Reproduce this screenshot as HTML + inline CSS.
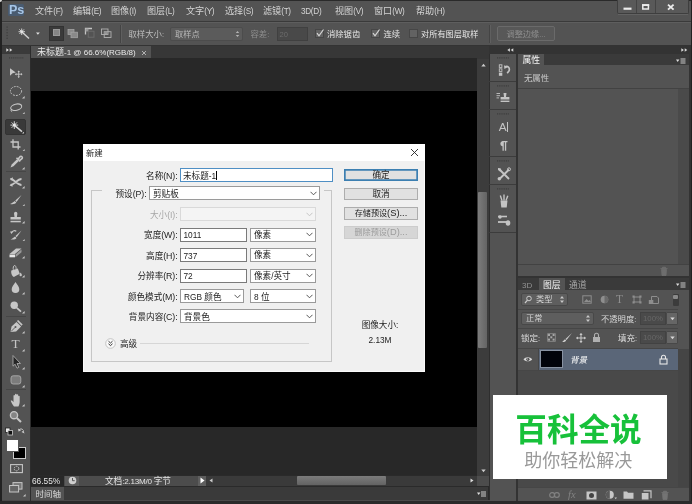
<!DOCTYPE html>
<html lang="zh"><head><meta charset="utf-8"><title>Photoshop</title><style>
html,body{margin:0;padding:0;background:#2a2a2a;}
body{width:692px;height:504px;position:relative;overflow:hidden;filter:blur(0.4px);font-family:"Liberation Sans","Noto Sans CJK SC",sans-serif;}
.b{position:absolute;display:block;}
.t{position:absolute;white-space:nowrap;font-family:"Liberation Sans","Noto Sans CJK SC",sans-serif;}
.l{vertical-align:baseline;}
</style></head><body>
<div class="b" style="left:0px;top:0px;width:692px;height:504px;background:#2a2a2a;"></div>
<div class="b" style="left:2px;top:1px;width:688.5px;height:20px;background:#535353;"></div>
<div class="b" style="left:8px;top:3.5px;width:15.5px;height:12.3px;background:#495b70;border-radius:1.500px"></div>
<div class="t" style="left:9px;top:1.500px;font-size:12.500px;line-height:16px;color:#a6c5e6;font-weight:bold;letter-spacing:-0.2px">Ps</div>
<div class="t" aria-label="文件(F)" style="left:35px;top:5.1px;font-size:9.1px;line-height:13px;color:#d4d4d4;">文件<span class="l" style="font-size:8.2px;letter-spacing:-0.3px;vertical-align:0.06em">(F)</span></div>
<div class="t" aria-label="编辑(E)" style="left:73px;top:5.1px;font-size:9.1px;line-height:13px;color:#d4d4d4;">编辑<span class="l" style="font-size:8.2px;letter-spacing:-0.3px;vertical-align:0.06em">(E)</span></div>
<div class="t" aria-label="图像(I)" style="left:111px;top:5.1px;font-size:9.1px;line-height:13px;color:#d4d4d4;">图像<span class="l" style="font-size:8.2px;letter-spacing:-0.3px;vertical-align:0.06em">(I)</span></div>
<div class="t" aria-label="图层(L)" style="left:147px;top:5.1px;font-size:9.1px;line-height:13px;color:#d4d4d4;">图层<span class="l" style="font-size:8.2px;letter-spacing:-0.3px;vertical-align:0.06em">(L)</span></div>
<div class="t" aria-label="文字(Y)" style="left:186px;top:5.1px;font-size:9.1px;line-height:13px;color:#d4d4d4;">文字<span class="l" style="font-size:8.2px;letter-spacing:-0.3px;vertical-align:0.06em">(Y)</span></div>
<div class="t" aria-label="选择(S)" style="left:225px;top:5.1px;font-size:9.1px;line-height:13px;color:#d4d4d4;">选择<span class="l" style="font-size:8.2px;letter-spacing:-0.3px;vertical-align:0.06em">(S)</span></div>
<div class="t" aria-label="滤镜(T)" style="left:263px;top:5.1px;font-size:9.1px;line-height:13px;color:#d4d4d4;">滤镜<span class="l" style="font-size:8.2px;letter-spacing:-0.3px;vertical-align:0.06em">(T)</span></div>
<div class="t" aria-label="3D(D)" style="left:301px;top:5.1px;font-size:9.1px;line-height:13px;color:#d4d4d4;"><span class="l" style="font-size:8.2px;letter-spacing:-0.3px;vertical-align:0.06em">3D(D)</span></div>
<div class="t" aria-label="视图(V)" style="left:335px;top:5.1px;font-size:9.1px;line-height:13px;color:#d4d4d4;">视图<span class="l" style="font-size:8.2px;letter-spacing:-0.3px;vertical-align:0.06em">(V)</span></div>
<div class="t" aria-label="窗口(W)" style="left:374px;top:5.1px;font-size:9.1px;line-height:13px;color:#d4d4d4;">窗口<span class="l" style="font-size:8.2px;letter-spacing:-0.3px;vertical-align:0.06em">(W)</span></div>
<div class="t" aria-label="帮助(H)" style="left:416px;top:5.1px;font-size:9.1px;line-height:13px;color:#d4d4d4;">帮助<span class="l" style="font-size:8.2px;letter-spacing:-0.3px;vertical-align:0.06em">(H)</span></div>
<div class="b" style="left:617px;top:0px;width:72px;height:13.5px;background:#595959;border:1px solid #3e3e3e;border-top:none;box-sizing:border-box;border-radius:0 0 2px 2px"></div>
<div class="b" style="left:618px;top:14px;width:70px;height:1px;background:#626262;"></div>
<div class="b" style="left:636px;top:0px;width:1px;height:13px;background:#444;"></div>
<div class="b" style="left:654.5px;top:0px;width:1px;height:13px;background:#444;"></div>
<svg class="b" style="left:617px;top:0px;" width="72" height="13" viewBox="0 0 72 13"><rect x="6.5" y="7.6" width="8" height="2.2" fill="#ececec"/><rect x="25.8" y="5" width="5.6" height="4" fill="none" stroke="#ececec" stroke-width="1.5"/><rect x="25" y="4.2" width="7.200" height="1.800" fill="#ececec"/><path d="M51 4.600l5.600 5M56.600 4.600l-5.600 5" stroke="#ececec" stroke-width="1.900"/></svg>
<div class="b" style="left:2px;top:21px;width:688.5px;height:1px;background:#3a3a3a;"></div>
<div class="b" style="left:2px;top:22px;width:688.5px;height:23px;background:#535353;border-top:1px solid #5e5e5e;box-sizing:border-box"></div>
<div class="b" style="left:2px;top:45px;width:688.5px;height:1px;background:#333;"></div>
<svg class="b" style="left:6px;top:26px;" width="3" height="14" viewBox="0 0 3 14"><rect x="0.5" y="0.5" width="1.2" height="1.2" fill="#3c3c3c"/><rect x="0.5" y="3.3" width="1.2" height="1.2" fill="#3c3c3c"/><rect x="0.5" y="6.1" width="1.2" height="1.2" fill="#3c3c3c"/><rect x="0.5" y="8.9" width="1.2" height="1.2" fill="#3c3c3c"/><rect x="0.5" y="11.7" width="1.2" height="1.2" fill="#3c3c3c"/></svg>
<svg class="b" style="left:16px;top:26px;" width="26" height="16" viewBox="0 0 26 16"><path d="M6 6L13 12.500" stroke="#cfcfcf" stroke-width="1.500"/><path d="M5.700 2.500v6.500M2.500 5.700h6.500M3.400 3.400l4.600 4.600M8 3.400l-4.600 4.600" stroke="#dcdcdc" stroke-width=".9"/><circle cx="5.700" cy="5.700" r="1.300" fill="#e4e4e4"/><path d="M20 6.500h3.800l-1.900 2.200z" fill="#e0e0e0"/></svg>
<div class="b" style="left:49px;top:25.5px;width:15px;height:15px;background:#3a3a3a;border:1px solid #323232;box-sizing:border-box"></div>
<div class="b" style="left:53px;top:29px;width:7px;height:7px;background:#868686;border:1px solid #9a9a9a;box-sizing:border-box"></div>
<svg class="b" style="left:67px;top:28px;" width="12" height="11" viewBox="0 0 12 11"><rect x="1" y="1.500" width="6" height="5" fill="#8a8a8a" stroke="#a4a4a4" stroke-width=".8"/><rect x="4" y="4.200" width="6.500" height="5.500" fill="#8a8a8a" stroke="#a4a4a4" stroke-width=".8"/></svg>
<svg class="b" style="left:84px;top:27px;" width="12" height="12" viewBox="0 0 12 12"><path d="M1.500 7.500v-6h6.500" fill="none" stroke="#c4c4c4" stroke-width="1.300"/><rect x="1.500" y="1.500" width="3" height="3" fill="#999"/><rect x="4.200" y="4.200" width="5.800" height="6" fill="none" stroke="#6e6e6e" stroke-width=".9"/></svg>
<svg class="b" style="left:100px;top:28px;" width="13" height="11" viewBox="0 0 13 11"><rect x="1.500" y="1" width="6.500" height="5.500" fill="none" stroke="#b0b0b0" stroke-width=".9"/><rect x="4.200" y="3.700" width="6.800" height="5.800" fill="none" stroke="#b0b0b0" stroke-width=".9"/><rect x="4.600" y="4.100" width="3" height="2" fill="#999"/></svg>
<div class="b" style="left:120px;top:25px;width:1px;height:18px;background:#444;"></div>
<div class="b" style="left:121px;top:25px;width:1px;height:18px;background:#5f5f5f;"></div>
<div class="t" aria-label="取样大小:" style="left:128.5px;top:28px;font-size:8.4px;line-height:12px;color:#bdbdbd;">取样大小<span class="l" style="font-size:7.4px">:</span></div>
<div class="b" style="left:170px;top:26.5px;width:73px;height:14.5px;background:#5b5b5b;border:1px solid #4c4c4c;box-sizing:border-box;border-radius:2px"></div>
<div class="t" aria-label="取样点" style="left:175px;top:28.5px;font-size:8.2px;line-height:11px;color:#b8b8b8;">取样点</div>
<svg class="b" style="left:234.5px;top:30px;" width="5" height="8" viewBox="0 0 5 8"><path d="M.8 3L2.500 1L4.200 3zM.8 5L2.500 7L4.200 5z" fill="#b4b4b4"/></svg>
<div class="t" aria-label="容差:" style="left:250.5px;top:28px;font-size:8.4px;line-height:12px;color:#8e8e8e;">容差<span class="l" style="font-size:7.4px">:</span></div>
<div class="b" style="left:276.5px;top:26.5px;width:31px;height:14.5px;background:#494949;border:1px solid #404040;box-sizing:border-box"></div>
<div class="t" aria-label="20" style="left:279.5px;top:28.7px;font-size:7.6px;line-height:11px;color:#6c6c6c;"><span class="l" style="font-size:7.6px">20</span></div>
<div class="b" style="left:315px;top:29px;width:8.5px;height:8.5px;background:#626262;border:1px solid #464646;box-sizing:border-box"></div><svg class="b" style="left:315px;top:27.5px;" width="10" height="10" viewBox="0 0 10 10"><path d="M2 5.200l2 2.600L8.500 1.500" fill="none" stroke="#d6d6d6" stroke-width="1.200"/></svg>
<div class="t" aria-label="消除锯齿" style="left:327px;top:28px;font-size:8.3px;line-height:12px;color:#e6e6e6;">消除锯齿</div>
<div class="b" style="left:371px;top:29px;width:8.5px;height:8.5px;background:#626262;border:1px solid #464646;box-sizing:border-box"></div><svg class="b" style="left:371px;top:27.5px;" width="10" height="10" viewBox="0 0 10 10"><path d="M2 5.200l2 2.600L8.500 1.500" fill="none" stroke="#d6d6d6" stroke-width="1.200"/></svg>
<div class="t" aria-label="连续" style="left:383.5px;top:28px;font-size:8.3px;line-height:12px;color:#e6e6e6;">连续</div>
<div class="b" style="left:409px;top:29px;width:8.5px;height:8.5px;background:#626262;border:1px solid #464646;box-sizing:border-box"></div>
<div class="t" aria-label="对所有图层取样" style="left:421px;top:28.5px;font-size:8.2px;line-height:11px;color:#e6e6e6;">对所有图层取样</div>
<div class="b" style="left:489px;top:25px;width:1px;height:18px;background:#444;"></div>
<div class="b" style="left:490px;top:25px;width:1px;height:18px;background:#5f5f5f;"></div>
<div class="b" style="left:497px;top:26px;width:58px;height:15px;background:#585858;border:1px solid #6a6a6a;box-sizing:border-box;border-radius:2px"></div>
<div class="t" aria-label="调整边缘..." style="left:426px;width:200px;text-align:center;top:28.5px;font-size:8.2px;line-height:11px;color:#8e8e8e;">调整边缘<span class="l" style="font-size:7.544px">...</span></div>
<div class="b" style="left:31px;top:46px;width:458px;height:12.5px;background:#373737;"></div>
<div class="b" style="left:31px;top:58px;width:446px;height:417px;background:#282828;"></div>
<div class="b" style="left:31px;top:90.5px;width:446px;height:336.2px;background:#000;"></div>
<div class="b" style="left:31px;top:46px;width:120px;height:12px;background:#535353;"></div>
<div class="t" aria-label="未标题-1 @ 66.6%(RGB/8)" style="left:37px;top:46.2px;font-size:9px;line-height:13px;color:#e8e8e8;">未标题<span class="l" style="font-size:8px">-1 @ 66.6%(RGB/8)</span></div>
<svg class="b" style="left:141px;top:49.5px;" width="6" height="6" viewBox="0 0 6 6"><path d="M1 1l4 4M5 1l-4 4" stroke="#bbb" stroke-width=".9"/></svg>
<div class="b" style="left:477px;top:58.5px;width:11.5px;height:417px;background:#3c3c3c;"></div>
<div class="b" style="left:477.8px;top:192px;width:9.7px;height:156px;background:#6c6c6c;border-radius:1px;background:linear-gradient(90deg,#7c7c7c,#646464)"></div>
<svg class="b" style="left:480.5px;top:62.5px;" width="5" height="4" viewBox="0 0 5 4"><path d="M.3 3.500L2.500 .8L4.700 3.500z" fill="#ccc"/></svg>
<svg class="b" style="left:480.5px;top:468.5px;" width="5" height="4" viewBox="0 0 5 4"><path d="M.3 .5L2.500 3.200L4.700 .5z" fill="#ccc"/></svg>
<div class="b" style="left:488.5px;top:46px;width:1.5px;height:455px;background:#2e2e2e;"></div>
<div class="b" style="left:31px;top:475.5px;width:457px;height:10.5px;background:#3a3a3a;"></div>
<div class="b" style="left:31px;top:475.5px;width:33px;height:10.5px;background:#282828;"></div>
<div class="t" aria-label="66.55%" style="left:32px;top:474.5px;font-size:8.3px;line-height:12px;color:#e6e6e6;"><span class="l" style="font-size:8.3px">66.55%</span></div>
<div class="b" style="left:64px;top:475.5px;width:134px;height:10.5px;background:#4c4c4c;"></div>
<div class="b" style="left:64.5px;top:476px;width:14.5px;height:9.5px;background:#5c5c5c;"></div>
<svg class="b" style="left:68px;top:476px;" width="9" height="9" viewBox="0 0 9 9"><circle cx="4.5" cy="4.5" r="3.8" fill="#cfcfcf"/><path d="M4.5 2v2.700h2.200" stroke="#555" stroke-width="1" fill="none"/></svg>
<div class="t" aria-label="文档:2.13M/0 字节" style="left:105px;top:474.8px;font-size:8.6px;line-height:12px;color:#e6e6e6;">文档<span class="l" style="font-size:8.1px;letter-spacing:-0.25px">:2.13M/0 </span>字节</div>
<div class="b" style="left:198px;top:475.5px;width:8px;height:10.5px;background:#5e5e5e;"></div>
<svg class="b" style="left:199.5px;top:477px;" width="5" height="7" viewBox="0 0 5 7"><path d="M0.5 0.5L4.5 3.5L0.5 6.5z" fill="#fff"/></svg>
<svg class="b" style="left:209px;top:478px;" width="4" height="5" viewBox="0 0 4 5"><path d="M3.5 0.5L0.5 2.5L3.5 4.5z" fill="#ccc"/></svg>
<svg class="b" style="left:470px;top:478px;" width="4" height="5" viewBox="0 0 4 5"><path d="M0.5 0.5L3.5 2.5L0.5 4.5z" fill="#ddd"/></svg>
<div class="b" style="left:297px;top:476px;width:89px;height:9px;background:#6c6c6c;background:linear-gradient(#7c7c7c,#636363);border-radius:1px"></div>
<div class="b" style="left:477px;top:475.5px;width:11.5px;height:10.5px;background:#4c4c4c;"></div>
<div class="b" style="left:31px;top:487px;width:457px;height:13px;background:#3a3a3a;"></div>
<div class="b" style="left:31px;top:487px;width:33px;height:13px;background:#535353;"></div>
<div class="t" aria-label="时间轴" style="left:35.5px;top:487.7px;font-size:8.5px;line-height:12px;color:#dcdcdc;">时间轴</div>
<svg class="b" style="left:477px;top:491px;" width="9" height="6" viewBox="0 0 9 6"><path d="M0 1.500h3.400L1.700 4z" fill="#ddd"/><path d="M4 1h5M4 3h5M4 5h5" stroke="#ccc" stroke-width="1"/></svg>
<div class="b" style="left:1px;top:500px;width:688px;height:1px;background:#4a4a4a;"></div>
<div class="b" style="left:2px;top:46px;width:28px;height:8px;background:#3a3a3a;"></div>
<div class="b" style="left:2px;top:54px;width:28px;height:446px;background:#535353;"></div>
<div class="b" style="left:30px;top:46px;width:1px;height:455px;background:#2c2c2c;"></div>
<svg class="b" style="left:5.5px;top:48px;" width="7" height="4" viewBox="0 0 7 4"><path d="M.3 .3L2.900 2L.3 3.700zM3.700 .3L6.300 2L3.700 3.700z" fill="#d8d8d8"/></svg>
<svg class="b" style="left:9px;top:56.5px;" width="15" height="2" viewBox="0 0 15 2"><rect x="0" y="0.3" width="1" height="1.2" fill="#3c3c3c"/><rect x="1.9" y="0.3" width="1" height="1.2" fill="#3c3c3c"/><rect x="3.8" y="0.3" width="1" height="1.2" fill="#3c3c3c"/><rect x="5.7" y="0.3" width="1" height="1.2" fill="#3c3c3c"/><rect x="7.6" y="0.3" width="1" height="1.2" fill="#3c3c3c"/><rect x="9.5" y="0.3" width="1" height="1.2" fill="#3c3c3c"/><rect x="11.4" y="0.3" width="1" height="1.2" fill="#3c3c3c"/><rect x="13.3" y="0.3" width="1" height="1.2" fill="#3c3c3c"/></svg>
<svg class="b" style="left:6px;top:65px;" width="18" height="15" viewBox="0 0 18 15"><path d="M4 3.300l5.800 4.200L6.600 8.300L4 10.800z" fill="#c6c6c6"/><path d="M12.700 6.200v6M9.700 9.200h6" stroke="#c6c6c6" stroke-width=".9"/><path d="M12.700 5.400l1.200 1.500h-2.400zM12.700 13l1.200-1.500h-2.400zM8.900 9.200l1.500-1.200v2.400zM16.500 9.200l-1.500-1.200v2.400z" fill="#c6c6c6"/></svg>
<svg class="b" style="left:6px;top:84px;" width="18" height="15" viewBox="0 0 18 15"><ellipse cx="10" cy="7" rx="5.600" ry="4.500" fill="none" stroke="#c6c6c6" stroke-width="1" stroke-dasharray="1.800 1.200"/></svg>
<svg class="b" style="left:22px;top:96px;" width="2.6" height="2.6" viewBox="0 0 2.6 2.6"><path d="M2.600 0v2.600h-2.600z" fill="#c8c8c8"/></svg>
<svg class="b" style="left:6px;top:101px;" width="18" height="15" viewBox="0 0 18 15"><ellipse cx="10.200" cy="6.200" rx="5.600" ry="3.100" fill="none" stroke="#c6c6c6" stroke-width="1.100" transform="rotate(-14 10.200 6.200)"/><path d="M5.600 8.300c-1 1-.4 2 .5 2.600" fill="none" stroke="#c6c6c6" stroke-width="1"/></svg>
<svg class="b" style="left:22px;top:111.5px;" width="2.6" height="2.6" viewBox="0 0 2.6 2.6"><path d="M2.600 0v2.600h-2.600z" fill="#c8c8c8"/></svg>
<div class="b" style="left:5px;top:118.5px;width:21px;height:16px;background:#393939;border-radius:2px;border:1px solid #333;box-sizing:border-box"></div>
<svg class="b" style="left:6px;top:118px;" width="18" height="16" viewBox="0 0 18 16"><path d="M8.800 7.600l7.200 6" stroke="#d4d4d4" stroke-width="1.500"/><path d="M8.300 3.200v7.800M4.400 7.100h7.800M5.600 4.400l5.400 5.400M11 4.400l-5.400 5.400" stroke="#dcdcdc" stroke-width=".9"/><circle cx="8.300" cy="7.100" r="1.500" fill="#eaeaea"/></svg>
<svg class="b" style="left:21.5px;top:131px;" width="2.6" height="2.6" viewBox="0 0 2.6 2.6"><path d="M2.600 0v2.600h-2.600z" fill="#c8c8c8"/></svg>
<svg class="b" style="left:7px;top:137px;" width="18" height="15" viewBox="0 0 18 15"><path d="M6 2.300v7.700h7.500M3.500 5h7.700v7.600" fill="none" stroke="#c6c6c6" stroke-width="1.300"/></svg>
<svg class="b" style="left:22px;top:148.5px;" width="2.6" height="2.6" viewBox="0 0 2.6 2.6"><path d="M2.600 0v2.600h-2.600z" fill="#c8c8c8"/></svg>
<svg class="b" style="left:7px;top:154px;" width="18" height="16" viewBox="0 0 18 16"><path d="M3.500 13.500l1.200-3L10 5.200l1.800 1.800L6.500 12.300z" fill="#c6c6c6"/><path d="M9.500 3.800l3.700 3.700M11 5.200l2.300-2.700a1.400 1.400 0 0 1 1.900 1.900l-2.700 2.300" stroke="#c6c6c6" stroke-width="1.600" fill="none"/></svg>
<svg class="b" style="left:22px;top:167px;" width="2.6" height="2.6" viewBox="0 0 2.6 2.6"><path d="M2.600 0v2.600h-2.600z" fill="#c8c8c8"/></svg>
<div class="b" style="left:6px;top:171px;width:20px;height:1px;background:#464646;"></div>
<svg class="b" style="left:7px;top:175px;" width="18" height="15" viewBox="0 0 18 15"><path d="M3.500 4c4 0 6.500 6 11 6M3.500 10c4 0 6.500-6 11-6" fill="none" stroke="#c6c6c6" stroke-width="1.900"/><path d="M2.500 10.200l3-1.800v3.400zM2.800 4l3-1.800v3.400z" fill="#c6c6c6"/></svg>
<svg class="b" style="left:22px;top:186px;" width="2.6" height="2.6" viewBox="0 0 2.6 2.6"><path d="M2.600 0v2.600h-2.600z" fill="#c8c8c8"/></svg>
<svg class="b" style="left:7px;top:192px;" width="18" height="15" viewBox="0 0 18 15"><path d="M14.500 3L8.300 8.600l1.200 1.300z" fill="#c6c6c6"/><path d="M7.800 9l1.500 1.500c-.8 1.500-3.500 2-6.300 1.400c1.800-.4 2.800-1.500 4.800-2.900z" fill="#c6c6c6"/></svg>
<svg class="b" style="left:22px;top:203.5px;" width="2.6" height="2.6" viewBox="0 0 2.6 2.6"><path d="M2.600 0v2.600h-2.600z" fill="#c8c8c8"/></svg>
<svg class="b" style="left:7px;top:210px;" width="18" height="15" viewBox="0 0 18 15"><path d="M7 3.500a1.700 1.700 0 1 1 3.400 0l-.5 3.500h3.900v2.600H3.500V7h4z" fill="#c6c6c6"/><rect x="3.500" y="10.800" width="10.300" height="1.500" fill="#c6c6c6"/></svg>
<svg class="b" style="left:22px;top:221px;" width="2.6" height="2.6" viewBox="0 0 2.6 2.6"><path d="M2.600 0v2.600h-2.600z" fill="#c8c8c8"/></svg>
<svg class="b" style="left:7px;top:228px;" width="18" height="15" viewBox="0 0 18 15"><path d="M14.500 2.500L8.500 8l1.200 1.300z" fill="#c6c6c6"/><path d="M8 8.400l1.500 1.500c-.8 1.400-3.300 1.800-6 1.300c1.700-.4 2.600-1.400 4.500-2.800z" fill="#c6c6c6"/><path d="M4.300 5.200a3.300 3.300 0 0 1 5-2" fill="none" stroke="#c6c6c6" stroke-width="1.100"/><path d="M3 3.500l1.500 2.600l1.500-2.300z" fill="#c6c6c6"/></svg>
<svg class="b" style="left:22px;top:238.5px;" width="2.6" height="2.6" viewBox="0 0 2.6 2.6"><path d="M2.600 0v2.600h-2.600z" fill="#c8c8c8"/></svg>
<svg class="b" style="left:7px;top:245px;" width="18" height="14" viewBox="0 0 18 14"><path d="M2.500 9l6.500-5.500h5.500L8 9z" fill="#c6c6c6"/><path d="M2.500 9.500h5.500v2.800H2.500z" fill="#e6e6e6"/><path d="M8.500 9.500L14.500 4.500v2.800L8.500 12.300z" fill="#999"/></svg>
<svg class="b" style="left:22px;top:256px;" width="2.6" height="2.6" viewBox="0 0 2.6 2.6"><path d="M2.600 0v2.600h-2.600z" fill="#c8c8c8"/></svg>
<svg class="b" style="left:7px;top:263px;" width="18" height="15" viewBox="0 0 18 15"><path d="M4.300 7.500l6.500-2l2 5.200l-6 3.300c-1.800-.8-3-4-2.500-6.500z" fill="#c6c6c6"/><path d="M6.300 6.800c-.4-2 .2-4.300 1.300-4.300s1.600 1.800 1.500 3.400" fill="none" stroke="#c6c6c6" stroke-width="1"/><path d="M13.600 9.500c.6 1 1.300 1.700 1.300 2.500a1.200 1.200 0 0 1-2.400 0c0-.8 .6-1.500 1.100-2.500z" fill="#c6c6c6"/></svg>
<svg class="b" style="left:22px;top:275px;" width="2.6" height="2.6" viewBox="0 0 2.6 2.6"><path d="M2.600 0v2.600h-2.600z" fill="#c8c8c8"/></svg>
<svg class="b" style="left:7px;top:280px;" width="18" height="15" viewBox="0 0 18 15"><path d="M8.500 2c1.800 2.900 3.800 4.700 3.800 7.200a3.800 3.800 0 0 1-7.600 0c0-2.500 2-4.300 3.800-7.200z" fill="#c6c6c6"/></svg>
<svg class="b" style="left:22px;top:292px;" width="2.6" height="2.6" viewBox="0 0 2.6 2.6"><path d="M2.600 0v2.600h-2.600z" fill="#c8c8c8"/></svg>
<svg class="b" style="left:7px;top:299px;" width="18" height="15" viewBox="0 0 18 15"><circle cx="7.200" cy="6.200" r="3.700" fill="#c6c6c6"/><path d="M9.800 8.800l4.200 3.800" stroke="#c6c6c6" stroke-width="1.800"/></svg>
<svg class="b" style="left:22px;top:311px;" width="2.6" height="2.6" viewBox="0 0 2.6 2.6"><path d="M2.600 0v2.600h-2.600z" fill="#c8c8c8"/></svg>
<div class="b" style="left:6px;top:315.5px;width:20px;height:1px;background:#464646;"></div>
<svg class="b" style="left:7px;top:318px;" width="18" height="16" viewBox="0 0 18 16"><path d="M3.500 14l1-5.500l5-4.600l4.600 4.600l-5 5z" fill="#c6c6c6"/><path d="M4 13.500l4.200-4.200" stroke="#555" stroke-width=".9"/><circle cx="8.500" cy="9" r="1" fill="#555"/><path d="M10.500 2.500l4.600 4.600" stroke="#c6c6c6" stroke-width="1.700"/></svg>
<svg class="b" style="left:22px;top:331px;" width="2.6" height="2.6" viewBox="0 0 2.6 2.6"><path d="M2.600 0v2.600h-2.600z" fill="#c8c8c8"/></svg>
<div class="t" style="left:11.500px;top:335px;font-family:'Liberation Serif',serif;font-size:13.300px;line-height:17px;color:#c6c6c6">T</div>
<svg class="b" style="left:22px;top:349px;" width="2.6" height="2.6" viewBox="0 0 2.6 2.6"><path d="M2.600 0v2.600h-2.600z" fill="#c8c8c8"/></svg>
<svg class="b" style="left:7px;top:354px;" width="18" height="16" viewBox="0 0 18 16"><path d="M6 1.500l7.500 8H10l1.800 3.800l-1.800 .9l-1.900-4L6 12.200z" fill="#262626" stroke="#a8a8a8" stroke-width=".9"/></svg>
<svg class="b" style="left:22px;top:367px;" width="2.6" height="2.6" viewBox="0 0 2.6 2.6"><path d="M2.600 0v2.600h-2.600z" fill="#c8c8c8"/></svg>
<svg class="b" style="left:7px;top:373px;" width="18" height="14" viewBox="0 0 18 14"><rect x="4" y="2.800" width="9.800" height="8.200" rx="2.200" fill="#7c7c7c" stroke="#acacac" stroke-width=".9"/></svg>
<svg class="b" style="left:22px;top:385px;" width="2.6" height="2.6" viewBox="0 0 2.6 2.6"><path d="M2.600 0v2.600h-2.600z" fill="#c8c8c8"/></svg>
<div class="b" style="left:6px;top:389px;width:20px;height:1px;background:#464646;"></div>
<svg class="b" style="left:8.5px;top:391.5px;" width="18" height="16" viewBox="0 0 18 16"><path d="M5 14.500c-1.500-2-2.800-4.200-3.300-5.700c.8-.8 1.900-.2 2.800 1.400V3.800c0-1 1.500-1 1.500 0V7V2.600c0-1 1.600-1 1.600 0V7V3c0-1 1.600-1 1.600 0V7.500V4.600c0-1 1.500-1 1.500 0V9.800c0 1.900-.6 3.300-1.300 4.700z" fill="#c6c6c6"/></svg>
<svg class="b" style="left:22px;top:404px;" width="2.6" height="2.6" viewBox="0 0 2.6 2.6"><path d="M2.600 0v2.600h-2.600z" fill="#c8c8c8"/></svg>
<svg class="b" style="left:7px;top:409px;" width="18" height="15" viewBox="0 0 18 15"><circle cx="7" cy="6.200" r="3.600" fill="#858585" stroke="#c6c6c6" stroke-width="1.400"/><path d="M9.800 9l4.200 4" stroke="#c6c6c6" stroke-width="2"/></svg>
<svg class="b" style="left:4px;top:427px;" width="22" height="9" viewBox="0 0 22 9"><rect x="1.500" y="1" width="4.500" height="4.500" fill="#eee" stroke="#222" stroke-width=".8"/><rect x="4" y="3.500" width="4.500" height="4.500" fill="#111" stroke="#ccc" stroke-width=".8"/><path d="M15 3c1.500-1.500 3-1.500 4.500 .5" fill="none" stroke="#ccc" stroke-width="1"/><path d="M14 1.500l.5 3l2.500-1zM20.500 6.500l-1-3l-2 1.500z" fill="#ccc"/></svg>
<div class="b" style="left:12.5px;top:446.5px;width:13px;height:12px;background:#000;border:1px solid #ccc;box-sizing:border-box"></div>
<div class="b" style="left:5.5px;top:439px;width:13.5px;height:12.5px;background:#fff;border:1px solid #555;box-sizing:border-box"></div>
<svg class="b" style="left:9.5px;top:464px;" width="13" height="10" viewBox="0 0 13 10"><rect x=".6" y=".6" width="11.800" height="8" fill="none" stroke="#c6c6c6" stroke-width="1.100"/><circle cx="6.500" cy="4.600" r="2.300" fill="none" stroke="#c6c6c6" stroke-width="1" stroke-dasharray="1.400 .9"/></svg>
<svg class="b" style="left:8.5px;top:482px;" width="14" height="11" viewBox="0 0 14 11"><rect x="4" y=".6" width="9" height="6.500" fill="#777" stroke="#c6c6c6" stroke-width="1"/><rect x=".6" y="3.500" width="9" height="6.500" fill="#666" stroke="#c6c6c6" stroke-width="1"/></svg>
<svg class="b" style="left:23px;top:494px;" width="2.6" height="2.6" viewBox="0 0 2.6 2.6"><path d="M2.600 0v2.600h-2.600z" fill="#c8c8c8"/></svg>
<div class="b" style="left:489px;top:46px;width:200px;height:8px;background:#333;"></div>
<svg class="b" style="left:507px;top:48px;" width="7" height="4" viewBox="0 0 7 4"><path d="M2.900 .3L.3 2L2.900 3.700zM6.300 .3L3.700 2L6.300 3.700z" fill="#d8d8d8"/></svg>
<svg class="b" style="left:680.5px;top:48px;" width="7" height="4" viewBox="0 0 7 4"><path d="M.3 .3L2.900 2L.3 3.700zM3.700 .3L6.300 2L3.700 3.700z" fill="#d8d8d8"/></svg>
<div class="b" style="left:490px;top:54px;width:26px;height:447px;background:#535353;"></div>
<div class="b" style="left:516px;top:46px;width:2px;height:455px;background:#333;"></div>
<svg class="b" style="left:497px;top:56.5px;" width="12" height="2" viewBox="0 0 12 2"><rect x="0" y=".3" width="1" height="1.200" fill="#3c3c3c"/><rect x="1.8" y=".3" width="1" height="1.200" fill="#3c3c3c"/><rect x="3.6" y=".3" width="1" height="1.200" fill="#3c3c3c"/><rect x="5.4" y=".3" width="1" height="1.200" fill="#3c3c3c"/><rect x="7.2" y=".3" width="1" height="1.200" fill="#3c3c3c"/><rect x="9" y=".3" width="1" height="1.200" fill="#3c3c3c"/><rect x="10.8" y=".3" width="1" height="1.200" fill="#3c3c3c"/></svg>
<svg class="b" style="left:497px;top:85px;" width="12" height="2" viewBox="0 0 12 2"><rect x="0" y=".3" width="1" height="1.200" fill="#3c3c3c"/><rect x="1.8" y=".3" width="1" height="1.200" fill="#3c3c3c"/><rect x="3.6" y=".3" width="1" height="1.200" fill="#3c3c3c"/><rect x="5.4" y=".3" width="1" height="1.200" fill="#3c3c3c"/><rect x="7.2" y=".3" width="1" height="1.200" fill="#3c3c3c"/><rect x="9" y=".3" width="1" height="1.200" fill="#3c3c3c"/><rect x="10.8" y=".3" width="1" height="1.200" fill="#3c3c3c"/></svg>
<svg class="b" style="left:497px;top:113px;" width="12" height="2" viewBox="0 0 12 2"><rect x="0" y=".3" width="1" height="1.200" fill="#3c3c3c"/><rect x="1.8" y=".3" width="1" height="1.200" fill="#3c3c3c"/><rect x="3.6" y=".3" width="1" height="1.200" fill="#3c3c3c"/><rect x="5.4" y=".3" width="1" height="1.200" fill="#3c3c3c"/><rect x="7.2" y=".3" width="1" height="1.200" fill="#3c3c3c"/><rect x="9" y=".3" width="1" height="1.200" fill="#3c3c3c"/><rect x="10.8" y=".3" width="1" height="1.200" fill="#3c3c3c"/></svg>
<svg class="b" style="left:497px;top:160px;" width="12" height="2" viewBox="0 0 12 2"><rect x="0" y=".3" width="1" height="1.200" fill="#3c3c3c"/><rect x="1.8" y=".3" width="1" height="1.200" fill="#3c3c3c"/><rect x="3.6" y=".3" width="1" height="1.200" fill="#3c3c3c"/><rect x="5.4" y=".3" width="1" height="1.200" fill="#3c3c3c"/><rect x="7.2" y=".3" width="1" height="1.200" fill="#3c3c3c"/><rect x="9" y=".3" width="1" height="1.200" fill="#3c3c3c"/><rect x="10.8" y=".3" width="1" height="1.200" fill="#3c3c3c"/></svg>
<svg class="b" style="left:497px;top:188px;" width="12" height="2" viewBox="0 0 12 2"><rect x="0" y=".3" width="1" height="1.200" fill="#3c3c3c"/><rect x="1.8" y=".3" width="1" height="1.200" fill="#3c3c3c"/><rect x="3.6" y=".3" width="1" height="1.200" fill="#3c3c3c"/><rect x="5.4" y=".3" width="1" height="1.200" fill="#3c3c3c"/><rect x="7.2" y=".3" width="1" height="1.200" fill="#3c3c3c"/><rect x="9" y=".3" width="1" height="1.200" fill="#3c3c3c"/><rect x="10.8" y=".3" width="1" height="1.200" fill="#3c3c3c"/></svg>
<div class="b" style="left:489px;top:81px;width:27px;height:1.3px;background:#3c3c3c;"></div>
<div class="b" style="left:489px;top:108.5px;width:27px;height:1.3px;background:#3c3c3c;"></div>
<div class="b" style="left:489px;top:156px;width:27px;height:1.3px;background:#3c3c3c;"></div>
<div class="b" style="left:489px;top:184px;width:27px;height:1.3px;background:#3c3c3c;"></div>
<div class="b" style="left:489px;top:232px;width:27px;height:1.3px;background:#3c3c3c;"></div>
<svg class="b" style="left:497px;top:63px;" width="15" height="15" viewBox="0 0 15 15"><rect x="2.300" y="1.800" width="2.600" height="2.600" fill="none" stroke="#c4c4c4" stroke-width=".9"/><rect x="2.300" y="5.800" width="2.600" height="2.600" fill="none" stroke="#c4c4c4" stroke-width=".9"/><rect x="1.900" y="9.600" width="3.400" height="3.200" fill="#c4c4c4"/><path d="M8 3.800c2.800-1.200 5 .8 4.200 3.800l-2 2.600" fill="none" stroke="#c4c4c4" stroke-width="1.600"/><path d="M7 2.200l.4 3.800l3-1.700z" fill="#c4c4c4"/></svg>
<svg class="b" style="left:495px;top:91px;" width="17" height="14" viewBox="0 0 17 14"><path d="M8.500 2h3l-.5 4h3.400v2.600H5.600V6h3.400z" fill="#c4c4c4"/><rect x="5.600" y="9.600" width="8.800" height="1.400" fill="#c4c4c4"/><path d="M1.500 2.500h3.500M1.500 4.700h3.500M1.500 6.900h2.500" stroke="#c4c4c4" stroke-width=".9"/></svg>
<div class="t" style="left:498.800px;top:118.700px;font-size:11.800px;line-height:16px;color:#c4c4c4">A</div>
<div class="b" style="left:507px;top:121.5px;width:1px;height:10.5px;background:#c4c4c4;"></div>
<svg class="b" style="left:497px;top:140px;" width="12" height="12" viewBox="0 0 12 12"><path d="M5.500 1h5v1.200h-1.300v8.500h-1.300V2.200h-1.100v8.500H5.500V6.300a2.700 2.700 0 0 1 0-5.300z" fill="#c4c4c4"/></svg>
<svg class="b" style="left:496px;top:166px;" width="16" height="15" viewBox="0 0 16 15"><path d="M3.500 3.500l9.500 9.500M13 3.500L3.500 13" stroke="#c4c4c4" stroke-width="1.900"/><circle cx="3.300" cy="12.800" r="1.700" fill="#c4c4c4"/><path d="M2 2l2.500 .3l1 2.200l-1.500 1l-2-1.500z" fill="#c4c4c4"/><circle cx="13" cy="3.300" r="1.500" fill="none" stroke="#c4c4c4" stroke-width="1"/></svg>
<svg class="b" style="left:497px;top:193px;" width="14" height="15" viewBox="0 0 14 15"><path d="M3.500 7.500h7l-.8 7H4.300z" fill="#c4c4c4"/><path d="M5 7.500l-1.700-5M7 7.500V1.500M9 7.500l1.800-4.800" stroke="#c4c4c4" stroke-width="1.400"/></svg>
<svg class="b" style="left:496px;top:214px;" width="16" height="13" viewBox="0 0 16 13"><path d="M2 2.500h9" stroke="#c4c4c4" stroke-width="1.600"/><circle cx="4" cy="3" r="1.700" fill="#c4c4c4"/><path d="M2 8h9" stroke="#c4c4c4" stroke-width="1.800"/><ellipse cx="12" cy="9" rx="2.300" ry="2.800" fill="#c4c4c4"/></svg>
<div class="b" style="left:518px;top:54px;width:171px;height:11px;background:#3a3a3a;"></div>
<div class="b" style="left:518px;top:54px;width:26px;height:12px;background:#535353;"></div>
<div class="t" aria-label="属性" style="left:522.5px;top:54px;font-size:8.8px;line-height:12px;color:#f4f4f4;">属性</div>
<svg class="b" style="left:676px;top:58px;" width="10" height="6" viewBox="0 0 10 6"><path d="M0 1.500h3.400L1.700 4z" fill="#ddd"/><path d="M4.500 1h5M4.500 3h5M4.500 5h5" stroke="#ccc" stroke-width="1"/></svg>
<div class="b" style="left:518px;top:65px;width:171px;height:199px;background:#535353;"></div>
<div class="t" aria-label="无属性" style="left:524px;top:72px;font-size:8.4px;line-height:12px;color:#c8c8c8;">无属性</div>
<div class="b" style="left:518px;top:88px;width:171px;height:1px;background:#424242;"></div>
<div class="b" style="left:678px;top:89px;width:11px;height:175px;background:#4a4a4a;"></div>
<div class="b" style="left:518px;top:264px;width:171px;height:1px;background:#424242;"></div>
<div class="b" style="left:518px;top:265px;width:171px;height:11px;background:#535353;"></div>
<svg class="b" style="left:659px;top:266px;" width="10" height="10" viewBox="0 0 10 10"><path d="M1.500 2.500h7M3.500 2.500V1.200h3V2.500M2.500 3.500l.5 6h4l.5-6z" fill="#6e6e6e" stroke="#6e6e6e" stroke-width=".8"/></svg>
<div class="b" style="left:518px;top:276px;width:171px;height:2px;background:#333;"></div>
<div class="b" style="left:518px;top:278px;width:171px;height:12px;background:#3a3a3a;"></div>
<div class="t" aria-label="3D" style="left:522px;top:278.5px;font-size:8.6px;line-height:12px;color:#929292;"><span class="l" style="font-size:8px">3D</span></div>
<div class="b" style="left:539px;top:278px;width:26px;height:13px;background:#535353;"></div>
<div class="t" aria-label="图层" style="left:543px;top:278.5px;font-size:8.8px;line-height:12px;color:#f4f4f4;">图层</div>
<div class="t" aria-label="通道" style="left:569px;top:278.5px;font-size:8.8px;line-height:12px;color:#a8a8a8;">通道</div>
<svg class="b" style="left:676px;top:281.5px;" width="10" height="6" viewBox="0 0 10 6"><path d="M0 1.500h3.400L1.700 4z" fill="#ddd"/><path d="M4.500 1h5M4.500 3h5M4.500 5h5" stroke="#ccc" stroke-width="1"/></svg>
<div class="b" style="left:518px;top:290px;width:171px;height:211px;background:#535353;"></div>
<div class="b" style="left:518px;top:371px;width:160px;height:116px;background:#494949;"></div>
<div class="b" style="left:678px;top:349px;width:11px;height:138px;background:#454545;"></div>
<div class="b" style="left:521px;top:293px;width:47px;height:13px;background:#5e5e5e;border:1px solid #484848;box-sizing:border-box;border-radius:2px"></div>
<svg class="b" style="left:524px;top:295px;" width="9" height="9" viewBox="0 0 9 9"><circle cx="5" cy="3.500" r="2.300" fill="none" stroke="#ccc" stroke-width="1"/><path d="M3.500 5.200L1 8" stroke="#ccc" stroke-width="1.200"/></svg>
<div class="t" aria-label="类型" style="left:536px;top:294px;font-size:8.2px;line-height:11px;color:#d4d4d4;">类型</div>
<svg class="b" style="left:559px;top:295px;" width="6" height="9" viewBox="0 0 6 9"><path d="M1 3.500L3 1L5 3.500zM1 5.500L3 8L5 5.500z" fill="#c8c8c8"/></svg>
<svg class="b" style="left:582px;top:295px;" width="10" height="9" viewBox="0 0 10 9"><rect x=".8" y=".8" width="8.400" height="7.400" fill="none" stroke="#8e8e8e" stroke-width="1"/><path d="M2 7l2.500-3l2 2l1-1l1.500 2z" fill="#8e8e8e"/></svg>
<svg class="b" style="left:600px;top:295px;" width="9" height="9" viewBox="0 0 9 9"><circle cx="4.500" cy="4.500" r="3.800" fill="#8e8e8e"/><path d="M4.500 .7a3.800 3.800 0 0 1 0 7.600z" fill="#6a6a6a"/></svg>
<div class="t" style="left:616px;top:292px;font-family:'Liberation Serif',serif;font-size:11.500px;line-height:14px;color:#8e8e8e">T</div>
<svg class="b" style="left:632px;top:295px;" width="10" height="9" viewBox="0 0 10 9"><rect x="2" y="2" width="6" height="5" fill="none" stroke="#8e8e8e" stroke-width="1"/><rect x=".5" y=".5" width="2.200" height="2.200" fill="#8e8e8e"/><rect x="7.300" y=".5" width="2.200" height="2.200" fill="#8e8e8e"/><rect x=".5" y="6.300" width="2.200" height="2.200" fill="#8e8e8e"/><rect x="7.300" y="6.300" width="2.200" height="2.200" fill="#8e8e8e"/></svg>
<svg class="b" style="left:648px;top:294px;" width="11" height="11" viewBox="0 0 11 11"><path d="M3.500 2.500h5.500l1.500 1.500v5.500h-7z" fill="none" stroke="#8e8e8e" stroke-width="1"/><rect x=".8" y="6" width="4.500" height="4" fill="#8e8e8e"/></svg>
<div class="b" style="left:672.5px;top:294px;width:6px;height:11.5px;background:#3c3c3c;border-radius:1px"></div>
<div class="b" style="left:673px;top:294.5px;width:5px;height:4px;background:#8a8a8a;border-radius:1px"></div>
<div class="b" style="left:518px;top:309px;width:160px;height:1px;background:#464646;"></div>
<div class="b" style="left:521px;top:312px;width:73px;height:13px;background:#5e5e5e;border:1px solid #484848;box-sizing:border-box;border-radius:2px"></div>
<div class="t" aria-label="正常" style="left:526px;top:313px;font-size:8.2px;line-height:11px;color:#d4d4d4;">正常</div>
<svg class="b" style="left:585px;top:314px;" width="6" height="9" viewBox="0 0 6 9"><path d="M1 3.500L3 1L5 3.500zM1 5.500L3 8L5 5.500z" fill="#c8c8c8"/></svg>
<div class="t" aria-label="不透明度:" style="left:601px;top:312.5px;font-size:8.3px;line-height:12px;color:#d8d8d8;">不透明度<span class="l" style="font-size:7.4px">:</span></div>
<div class="b" style="left:640px;top:312px;width:26px;height:13px;background:#4a4a4a;border:1px solid #424242;box-sizing:border-box"></div>
<div class="t" aria-label="100%" style="left:643px;top:313px;font-size:7.8px;line-height:11px;color:#686868;"><span class="l" style="font-size:7.8px">100%</span></div>
<div class="b" style="left:666px;top:312px;width:11.5px;height:13px;background:#666;border:1px solid #484848;box-sizing:border-box;border-radius:1px"></div>
<svg class="b" style="left:669.5px;top:317px;" width="5" height="4" viewBox="0 0 5 4"><path d="M.3 .5h4.400L2.500 3.200z" fill="#d8d8d8"/></svg>
<div class="b" style="left:518px;top:328px;width:160px;height:1px;background:#464646;"></div>
<div class="t" aria-label="锁定:" style="left:521px;top:331.5px;font-size:8.5px;line-height:12px;color:#dcdcdc;">锁定<span class="l" style="font-size:7.4px">:</span></div>
<svg class="b" style="left:547px;top:333px;" width="9" height="9" viewBox="0 0 9 9"><rect x="1" y="1" width="2" height="2" fill="#a8a8a8"/><rect x="5.6" y="1" width="2" height="2" fill="#a8a8a8"/><rect x="3.3" y="3.3" width="2" height="2" fill="#a8a8a8"/><rect x="1" y="5.6" width="2" height="2" fill="#a8a8a8"/><rect x="5.6" y="5.600" width="2" height="2" fill="#a8a8a8"/><rect x=".7" y=".7" width="7.600" height="7.600" fill="none" stroke="#909090" stroke-width=".8"/></svg>
<svg class="b" style="left:561px;top:332px;" width="12" height="11" viewBox="0 0 12 11"><path d="M11 1L4.500 7l1 1z" fill="#d0d0d0"/><path d="M4 7.200l1.200 1.200c-1 1.500-2.500 1.800-4.200 1.500c1.200-.5 1.700-1.600 3-2.700z" fill="#d0d0d0"/></svg>
<svg class="b" style="left:576px;top:332.5px;" width="10" height="10" viewBox="0 0 10 10"><path d="M5 .5v9M.5 5h9" stroke="#c8c8c8" stroke-width="1"/><path d="M5 0l1.600 2H3.400zM5 10l1.600-2H3.400zM0 5l2-1.600v3.200zM10 5l-2-1.600v3.200z" fill="#c8c8c8"/></svg>
<svg class="b" style="left:592px;top:332px;" width="9" height="11" viewBox="0 0 9 11"><rect x="1" y="5" width="7" height="5" fill="#b0b0b0"/><path d="M2.500 5V3.200a2 2 0 0 1 4 0V5" fill="none" stroke="#b0b0b0" stroke-width="1.100"/></svg>
<div class="t" aria-label="填充:" style="left:618px;top:331.5px;font-size:8.5px;line-height:12px;color:#dcdcdc;">填充<span class="l" style="font-size:7.4px">:</span></div>
<div class="b" style="left:640px;top:331px;width:26px;height:13px;background:#4a4a4a;border:1px solid #424242;box-sizing:border-box"></div>
<div class="t" aria-label="100%" style="left:643px;top:332px;font-size:7.8px;line-height:11px;color:#686868;"><span class="l" style="font-size:7.8px">100%</span></div>
<div class="b" style="left:666px;top:331px;width:11.5px;height:13px;background:#666;border:1px solid #484848;box-sizing:border-box;border-radius:1px"></div>
<svg class="b" style="left:669.5px;top:336px;" width="5" height="4" viewBox="0 0 5 4"><path d="M.3 .5h4.400L2.500 3.200z" fill="#d8d8d8"/></svg>
<div class="b" style="left:518px;top:348px;width:160px;height:1px;background:#464646;"></div>
<div class="b" style="left:539px;top:349px;width:139px;height:21px;background:#5a6678;"></div>
<div class="b" style="left:538px;top:349px;width:1px;height:21px;background:#464646;"></div>
<svg class="b" style="left:523px;top:355.5px;" width="10" height="7" viewBox="0 0 10 7"><path d="M.5 3.300C2.300 .6 7.300 .6 9.200 3.300C7.300 6 2.300 6 .5 3.300z" fill="#d8d8d8"/><circle cx="4.900" cy="3.300" r="1.600" fill="#4a4a4a"/><circle cx="4.600" cy="3" r=".6" fill="#e0e0e0"/></svg>
<div class="b" style="left:540px;top:350px;width:23px;height:18px;background:#01030a;border:1px solid #8892a2;box-sizing:border-box"></div>
<div class="t" aria-label="背景" style="left:571px;top:353.5px;font-size:8.4px;line-height:12px;color:#fff;transform:skewX(-12deg);">背景</div>
<svg class="b" style="left:659px;top:354px;" width="9" height="11" viewBox="0 0 9 11"><rect x="1" y="5" width="7" height="5" fill="none" stroke="#e8e8e8" stroke-width="1.100"/><path d="M2.500 5V3.200a2 2 0 0 1 4 0V5" fill="none" stroke="#e8e8e8" stroke-width="1.100"/></svg>
<div class="b" style="left:518px;top:370px;width:160px;height:1px;background:#464646;"></div>
<div class="b" style="left:518px;top:487px;width:171px;height:1px;background:#464646;"></div>
<svg class="b" style="left:549px;top:491px;" width="11" height="8" viewBox="0 0 11 8"><rect x=".7" y="1.700" width="5" height="4.600" rx="2.300" fill="none" stroke="#828282" stroke-width="1.200"/><rect x="5.300" y="1.700" width="5" height="4.600" rx="2.300" fill="none" stroke="#828282" stroke-width="1.200"/></svg>
<div class="t" style="left:568px;top:488px;font-family:'Liberation Serif',serif;font-style:italic;font-size:10.500px;line-height:13px;color:#828282">fx</div>
<svg class="b" style="left:586px;top:490.5px;" width="11" height="9" viewBox="0 0 11 9"><rect x=".5" y=".5" width="10" height="8" fill="#c6c6c6"/><circle cx="5.500" cy="4.500" r="2.500" fill="#444"/></svg>
<svg class="b" style="left:605px;top:490px;" width="12" height="10" viewBox="0 0 12 10"><circle cx="4.800" cy="4.800" r="4" fill="#c6c6c6"/><path d="M4.800 .8a4 4 0 0 0 0 8z" fill="#5a5a5a"/><path d="M9.500 7.500h2.500l-1.250 1.800z" fill="#c6c6c6"/></svg>
<svg class="b" style="left:623px;top:490px;" width="11" height="9" viewBox="0 0 11 9"><path d="M.5 1.500h3.500l1 1.300h5.500v6H.5z" fill="#c6c6c6"/></svg>
<svg class="b" style="left:641px;top:490px;" width="11" height="10" viewBox="0 0 11 10"><path d="M2.500 .8h7.500v7.500" fill="none" stroke="#c6c6c6" stroke-width="1.200"/><rect x=".8" y="3" width="6.700" height="6.500" fill="#c6c6c6"/></svg>
<svg class="b" style="left:660px;top:490px;" width="10" height="10" viewBox="0 0 10 10"><path d="M1.500 2.500h7M3.500 2.500V1.200h3V2.500M2.500 3.500l.5 6h4l.5-6z" fill="#747474" stroke="#747474" stroke-width=".8"/></svg>
<div class="b" style="left:689px;top:46px;width:1.5px;height:458px;background:#333;"></div>
<div class="b" style="left:690.5px;top:0px;width:1.5px;height:504px;background:#222;"></div>
<div class="b" style="left:0px;top:0px;width:2px;height:504px;background:#222;"></div>
<div class="b" style="left:0px;top:0px;width:2px;height:1.5px;background:#d8d8d8;border-radius:0 0 2px 0"></div>
<div class="b" style="left:0px;top:501px;width:692px;height:3px;background:#2a2a2a;"></div>
<div class="b" style="left:493px;top:395px;width:174px;height:84px;background:#fff;"></div>
<div class="t" aria-label="百科全说" style="left:478.5px;width:200px;text-align:center;top:408.3px;font-size:31.6px;line-height:44px;color:#17c13a;font-weight:bold;">百科全说</div>
<div class="t" aria-label="助你轻松解决" style="left:478.3px;width:200px;text-align:center;top:448.5px;font-size:18px;line-height:25px;color:#999;">助你轻松解决</div>
<div class="b" style="left:82.8px;top:143.7px;width:342.5px;height:228.5px;background:#f0f0f0;border:1px solid #fafafa;box-sizing:border-box"></div>
<div class="b" style="left:83px;top:144px;width:342px;height:16.5px;background:#fff;"></div>
<div class="t" aria-label="新建" style="left:86px;top:146.5px;font-size:8.4px;line-height:12px;color:#1c1c1c;">新建</div>
<svg class="b" style="left:410px;top:148px;" width="9" height="9" viewBox="0 0 9 9"><path d="M1 1l7 7M8 1L1 8" stroke="#222" stroke-width=".9"/></svg>
<div class="b" style="left:91px;top:189.8px;width:240.5px;height:172.7px;border:1px solid #c6c6c6;box-sizing:border-box"></div>
<div class="b" style="left:102px;top:186px;width:222px;height:10px;background:#f0f0f0;"></div>
<div class="t" aria-label="名称(N):" style="right:514.5px;top:170.1px;font-size:8.6px;line-height:12px;color:#1c1c1c;">名称<span class="l" style="font-size:8.8px;letter-spacing:-0.1px">(N):</span></div>
<div class="b" style="left:180px;top:167.8px;width:153px;height:14.2px;background:#fff;border:1px solid #4f8fc4;box-sizing:border-box"></div>
<div class="t" aria-label="未标题-1" style="left:183px;top:169.8px;font-size:8.6px;line-height:12px;color:#1c1c1c;">未标题<span class="l" style="font-size:8.3px">-1</span></div>
<div class="b" style="left:215.8px;top:170.5px;width:0.8px;height:9.5px;background:#000;"></div>
<div class="t" aria-label="预设(P):" style="right:545.5px;top:188.1px;font-size:8.6px;line-height:12px;color:#1c1c1c;">预设<span class="l" style="font-size:8.8px;letter-spacing:-0.1px">(P):</span></div>
<div class="b" style="left:149px;top:185.8px;width:171px;height:14.6px;background:#fff;border:1px solid #9a9a9a;box-sizing:border-box"></div><svg class="b" style="left:310px;top:190.9px;" width="7" height="5" viewBox="0 0 7 5"><path d="M.5 .8L3.500 3.800L6.500 .8" fill="none" stroke="#444" stroke-width=".9"/></svg><div class="t" aria-label="剪贴板" style="left:153px;top:187.7px;font-size:8.6px;line-height:12px;color:#1c1c1c;">剪贴板</div>
<div class="t" aria-label="大小(I):" style="right:514.5px;top:208.6px;font-size:8.6px;line-height:12px;color:#a6a6a6;">大小<span class="l" style="font-size:8.8px;letter-spacing:-0.1px">(I):</span></div>
<div class="b" style="left:180px;top:207.2px;width:135.5px;height:14.2px;background:#f4f4f4;border:1px solid #d9d9d9;box-sizing:border-box"></div><svg class="b" style="left:305.5px;top:212.1px;" width="7" height="5" viewBox="0 0 7 5"><path d="M.5 .8L3.500 3.800L6.500 .8" fill="none" stroke="#c0c0c0" stroke-width=".9"/></svg>
<div class="t" aria-label="宽度(W):" style="right:514.5px;top:229.1px;font-size:8.6px;line-height:12px;color:#1c1c1c;">宽度<span class="l" style="font-size:8.8px;letter-spacing:-0.1px">(W):</span></div>
<div class="b" style="left:180px;top:227.5px;width:67px;height:14px;background:#fff;border:1px solid #7a7a7a;box-sizing:border-box"></div>
<div class="t" aria-label="1011" style="left:183.5px;top:229.2px;font-size:8.3px;line-height:12px;color:#1c1c1c;"><span class="l" style="font-size:8.3px">1011</span></div>
<div class="b" style="left:250px;top:227.5px;width:65.5px;height:14px;background:#fff;border:1px solid #9a9a9a;box-sizing:border-box"></div><svg class="b" style="left:305.5px;top:232.3px;" width="7" height="5" viewBox="0 0 7 5"><path d="M.5 .8L3.500 3.800L6.500 .8" fill="none" stroke="#444" stroke-width=".9"/></svg><div class="t" aria-label="像素" style="left:254px;top:229.1px;font-size:8.6px;line-height:12px;color:#1c1c1c;">像素</div>
<div class="t" aria-label="高度(H):" style="right:514.5px;top:249.6px;font-size:8.6px;line-height:12px;color:#1c1c1c;">高度<span class="l" style="font-size:8.8px;letter-spacing:-0.1px">(H):</span></div>
<div class="b" style="left:180px;top:247.8px;width:67px;height:14px;background:#fff;border:1px solid #7a7a7a;box-sizing:border-box"></div>
<div class="t" aria-label="737" style="left:183.5px;top:249.5px;font-size:8.3px;line-height:12px;color:#1c1c1c;"><span class="l" style="font-size:8.3px">737</span></div>
<div class="b" style="left:250px;top:247.8px;width:65.5px;height:14px;background:#fff;border:1px solid #9a9a9a;box-sizing:border-box"></div><svg class="b" style="left:305.5px;top:252.6px;" width="7" height="5" viewBox="0 0 7 5"><path d="M.5 .8L3.500 3.800L6.500 .8" fill="none" stroke="#444" stroke-width=".9"/></svg><div class="t" aria-label="像素" style="left:254px;top:249.4px;font-size:8.6px;line-height:12px;color:#1c1c1c;">像素</div>
<div class="t" aria-label="分辨率(R):" style="right:514.5px;top:270.1px;font-size:8.6px;line-height:12px;color:#1c1c1c;">分辨率<span class="l" style="font-size:8.8px;letter-spacing:-0.1px">(R):</span></div>
<div class="b" style="left:180px;top:268.5px;width:67px;height:14px;background:#fff;border:1px solid #7a7a7a;box-sizing:border-box"></div>
<div class="t" aria-label="72" style="left:183.5px;top:270px;font-size:8.3px;line-height:12px;color:#1c1c1c;"><span class="l" style="font-size:8.3px">72</span></div>
<div class="b" style="left:250px;top:268.5px;width:65.5px;height:14px;background:#fff;border:1px solid #9a9a9a;box-sizing:border-box"></div><svg class="b" style="left:305.5px;top:273.3px;" width="7" height="5" viewBox="0 0 7 5"><path d="M.5 .8L3.500 3.800L6.500 .8" fill="none" stroke="#444" stroke-width=".9"/></svg><div class="t" aria-label="像素/英寸" style="left:254px;top:270.1px;font-size:8.6px;line-height:12px;color:#1c1c1c;">像素<span class="l" style="font-size:8.3px">/</span>英寸</div>
<div class="t" aria-label="颜色模式(M):" style="right:514.5px;top:290.6px;font-size:8.6px;line-height:12px;color:#1c1c1c;">颜色模式<span class="l" style="font-size:8.8px;letter-spacing:-0.1px">(M):</span></div>
<div class="b" style="left:180px;top:288.8px;width:64px;height:14.3px;background:#fff;border:1px solid #9a9a9a;box-sizing:border-box"></div><svg class="b" style="left:234px;top:293.75px;" width="7" height="5" viewBox="0 0 7 5"><path d="M.5 .8L3.500 3.800L6.500 .8" fill="none" stroke="#444" stroke-width=".9"/></svg><div class="t" aria-label="RGB 颜色" style="left:184px;top:290.55px;font-size:8.6px;line-height:12px;color:#1c1c1c;"><span class="l" style="font-size:8.3px">RGB </span>颜色</div>
<div class="b" style="left:250px;top:288.8px;width:65.5px;height:14.3px;background:#fff;border:1px solid #9a9a9a;box-sizing:border-box"></div><svg class="b" style="left:305.5px;top:293.75px;" width="7" height="5" viewBox="0 0 7 5"><path d="M.5 .8L3.500 3.800L6.500 .8" fill="none" stroke="#444" stroke-width=".9"/></svg><div class="t" aria-label="8 位" style="left:254px;top:290.55px;font-size:8.6px;line-height:12px;color:#1c1c1c;"><span class="l" style="font-size:8.3px">8 </span>位</div>
<div class="t" aria-label="背景内容(C):" style="right:514.5px;top:311.1px;font-size:8.6px;line-height:12px;color:#1c1c1c;">背景内容<span class="l" style="font-size:8.8px;letter-spacing:-0.1px">(C):</span></div>
<div class="b" style="left:180px;top:309.3px;width:135.5px;height:14.2px;background:#fff;border:1px solid #9a9a9a;box-sizing:border-box"></div><svg class="b" style="left:305.5px;top:314.2px;" width="7" height="5" viewBox="0 0 7 5"><path d="M.5 .8L3.500 3.800L6.500 .8" fill="none" stroke="#444" stroke-width=".9"/></svg><div class="t" aria-label="背景色" style="left:184px;top:311px;font-size:8.6px;line-height:12px;color:#1c1c1c;">背景色</div>
<svg class="b" style="left:105px;top:337.5px;" width="11" height="11" viewBox="0 0 11 11"><circle cx="5.500" cy="5.500" r="4.800" fill="#fafafa" stroke="#b8b8b8" stroke-width=".8"/><path d="M3.500 3.200L5.500 5L7.500 3.200M3.500 5.800L5.500 7.600L7.500 5.800" fill="none" stroke="#333" stroke-width="1"/></svg>
<div class="t" aria-label="高级" style="left:120px;top:337.5px;font-size:8.6px;line-height:12px;color:#1c1c1c;">高级</div>
<div class="b" style="left:140px;top:342.5px;width:169px;height:1px;background:#d6d6d6;"></div>
<div class="b" style="left:344px;top:169px;width:74px;height:12px;background:#e1e1e1;border:1px solid #3c7fb1;box-sizing:border-box;box-shadow:inset 0 0 0 .7px #3c7fb1"></div><div class="t" aria-label="确定" style="left:281px;width:200px;text-align:center;top:169.4px;font-size:8.6px;line-height:12px;color:#1c1c1c;">确定</div>
<div class="b" style="left:344px;top:188px;width:74px;height:12px;background:#e1e1e1;border:1px solid #adadad;box-sizing:border-box"></div><div class="t" aria-label="取消" style="left:281px;width:200px;text-align:center;top:188.4px;font-size:8.6px;line-height:12px;color:#1c1c1c;">取消</div>
<div class="b" style="left:344px;top:207px;width:74px;height:13px;background:#e1e1e1;border:1px solid #adadad;box-sizing:border-box"></div><div class="t" aria-label="存储预设(S)..." style="left:281px;width:200px;text-align:center;top:208.4px;font-size:8.1px;line-height:11px;color:#1c1c1c;">存储预设<span class="l" style="font-size:9.3px">(S)...</span></div>
<div class="b" style="left:344px;top:226px;width:74px;height:13px;background:#d6d6d6;border:1px solid #cccccc;box-sizing:border-box"></div><div class="t" aria-label="删除预设(D)..." style="left:281px;width:200px;text-align:center;top:227.4px;font-size:8.1px;line-height:11px;color:#9c9c9c;">删除预设<span class="l" style="font-size:9.3px">(D)...</span></div>
<div class="t" aria-label="图像大小:" style="left:280px;width:200px;text-align:center;top:318.8px;font-size:8.6px;line-height:12px;color:#1c1c1c;">图像大小<span class="l" style="font-size:8.3px">:</span></div>
<div class="t" aria-label="2.13M" style="left:280px;width:200px;text-align:center;top:334.3px;font-size:8.3px;line-height:12px;color:#1c1c1c;"><span class="l" style="font-size:8.3px">2.13M</span></div>
</body></html>
